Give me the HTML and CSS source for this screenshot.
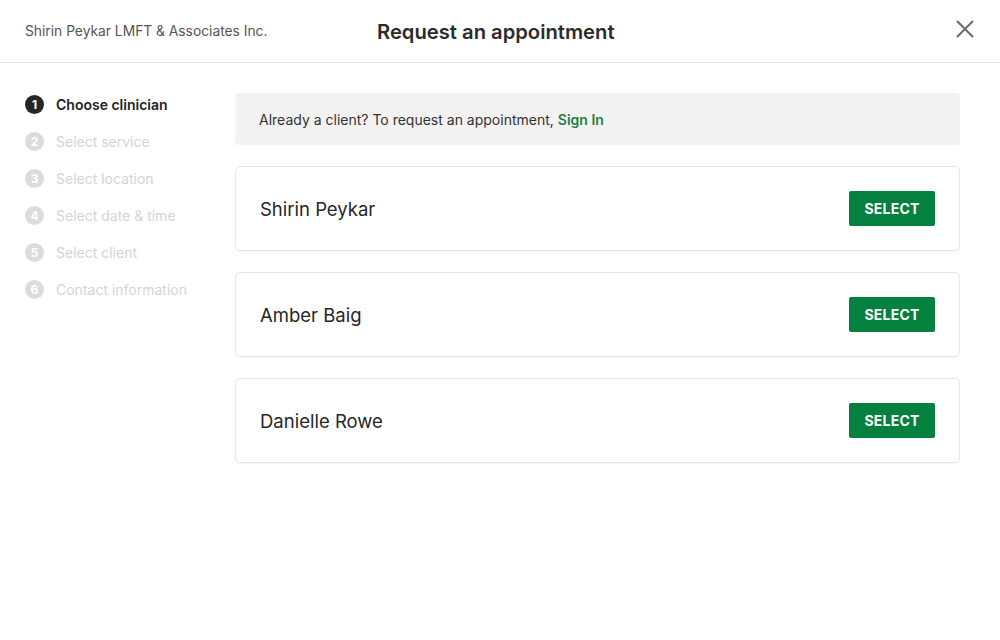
FILE: index.html
```html
<!DOCTYPE html>
<html>
<head>
<meta charset="utf-8">
<link rel="stylesheet" href="styles.css">
</head>
<body>
<div class="modal">
  <header class="header">
    <div class="practice">Shirin Peykar LMFT &amp; Associates Inc.</div>
    <h1 class="title">Request an appointment</h1>
    <button class="close" aria-label="Close">
      <svg width="20" height="20" viewBox="0 0 20 20"><path d="M2.5 2.5 L17.5 17.5 M17.5 2.5 L2.5 17.5" stroke="#6a6a6a" stroke-width="2" stroke-linecap="round" fill="none"/></svg>
    </button>
  </header>
  <div class="body">
    <ol class="steps">
      <li class="step active"><span class="num">1</span>Choose clinician</li>
      <li class="step"><span class="num">2</span>Select service</li>
      <li class="step"><span class="num">3</span>Select location</li>
      <li class="step"><span class="num">4</span>Select date &amp; time</li>
      <li class="step"><span class="num">5</span>Select client</li>
      <li class="step"><span class="num">6</span>Contact information</li>
    </ol>
    <main class="main">
      <div class="notice">Already a client? To request an appointment, <a class="signin" href="#">Sign In</a></div>
      <div class="card"><span class="name">Shirin Peykar</span><button class="select">SELECT</button></div>
      <div class="card"><span class="name">Amber Baig</span><button class="select">SELECT</button></div>
      <div class="card"><span class="name">Danielle Rowe</span><button class="select">SELECT</button></div>
    </main>
  </div>
</div>
</body>
</html>
```
FILE: styles.css
```css
* { box-sizing: border-box; }
html, body { margin: 0; padding: 0; background: #fff; }
body { font-family: Inter, "Noto Sans", sans-serif; color: #333; width: 1000px; height: 640px; overflow: hidden; }
.modal { width: 1000px; height: 640px; display: flex; flex-direction: column; }
.header { height: 63px; border-bottom: 1px solid #e6e6e6; display: flex; align-items: center; padding: 0 25px; }
.practice { font-size: 13.8px; color: #555; width: 352px; }
.title { margin: 0; font-size: 20.2px; font-weight: 600; color: #2b2b2b; flex: 1; }
.close { background: none; border: 0; padding: 0; width: 20px; height: 20px; cursor: pointer; display: flex; margin-top: -4px; }
.body { display: flex; padding: 30px 40px 0 25px; }
.steps { list-style: none; margin: 0; padding: 0; width: 210px; flex-shrink: 0; }
.step { display: flex; align-items: center; height: 37px; font-size: 14px; color: #d4d4d4; }
.step:first-child { margin-top: -7px; }
.num { width: 19px; height: 19px; border-radius: 50%; background: #dcdcdc; color: #fff; font-size: 12px; font-weight: 700; display: flex; align-items: center; justify-content: center; margin-right: 12px; }
.step.active { color: #222; font-weight: 600; }
.step.active .num { background: #262626; }
.main { flex: 1; display: flex; flex-direction: column; gap: 21px; }
.notice { background: #f2f2f2; border-radius: 4px; height: 52px; display: flex; align-items: center; padding: 0 24px; font-size: 14px; color: #333; }
.signin { color: #1e8043; font-weight: 600; text-decoration: none; margin-left: 4px; }
.card { height: 85px; border: 1px solid #e6e6e6; border-radius: 5px; display: flex; align-items: center; justify-content: space-between; padding: 0 24px; box-shadow: 0 1px 2px rgba(0,0,0,0.04); }
.name { font-size: 18.5px; color: #262626; }
.select { background: #04803f; color: #fff; border: 0; border-radius: 2px; width: 86px; height: 35px; font-family: Inter, sans-serif; font-weight: 700; font-size: 14px; letter-spacing: 0.2px; cursor: pointer; }
```
